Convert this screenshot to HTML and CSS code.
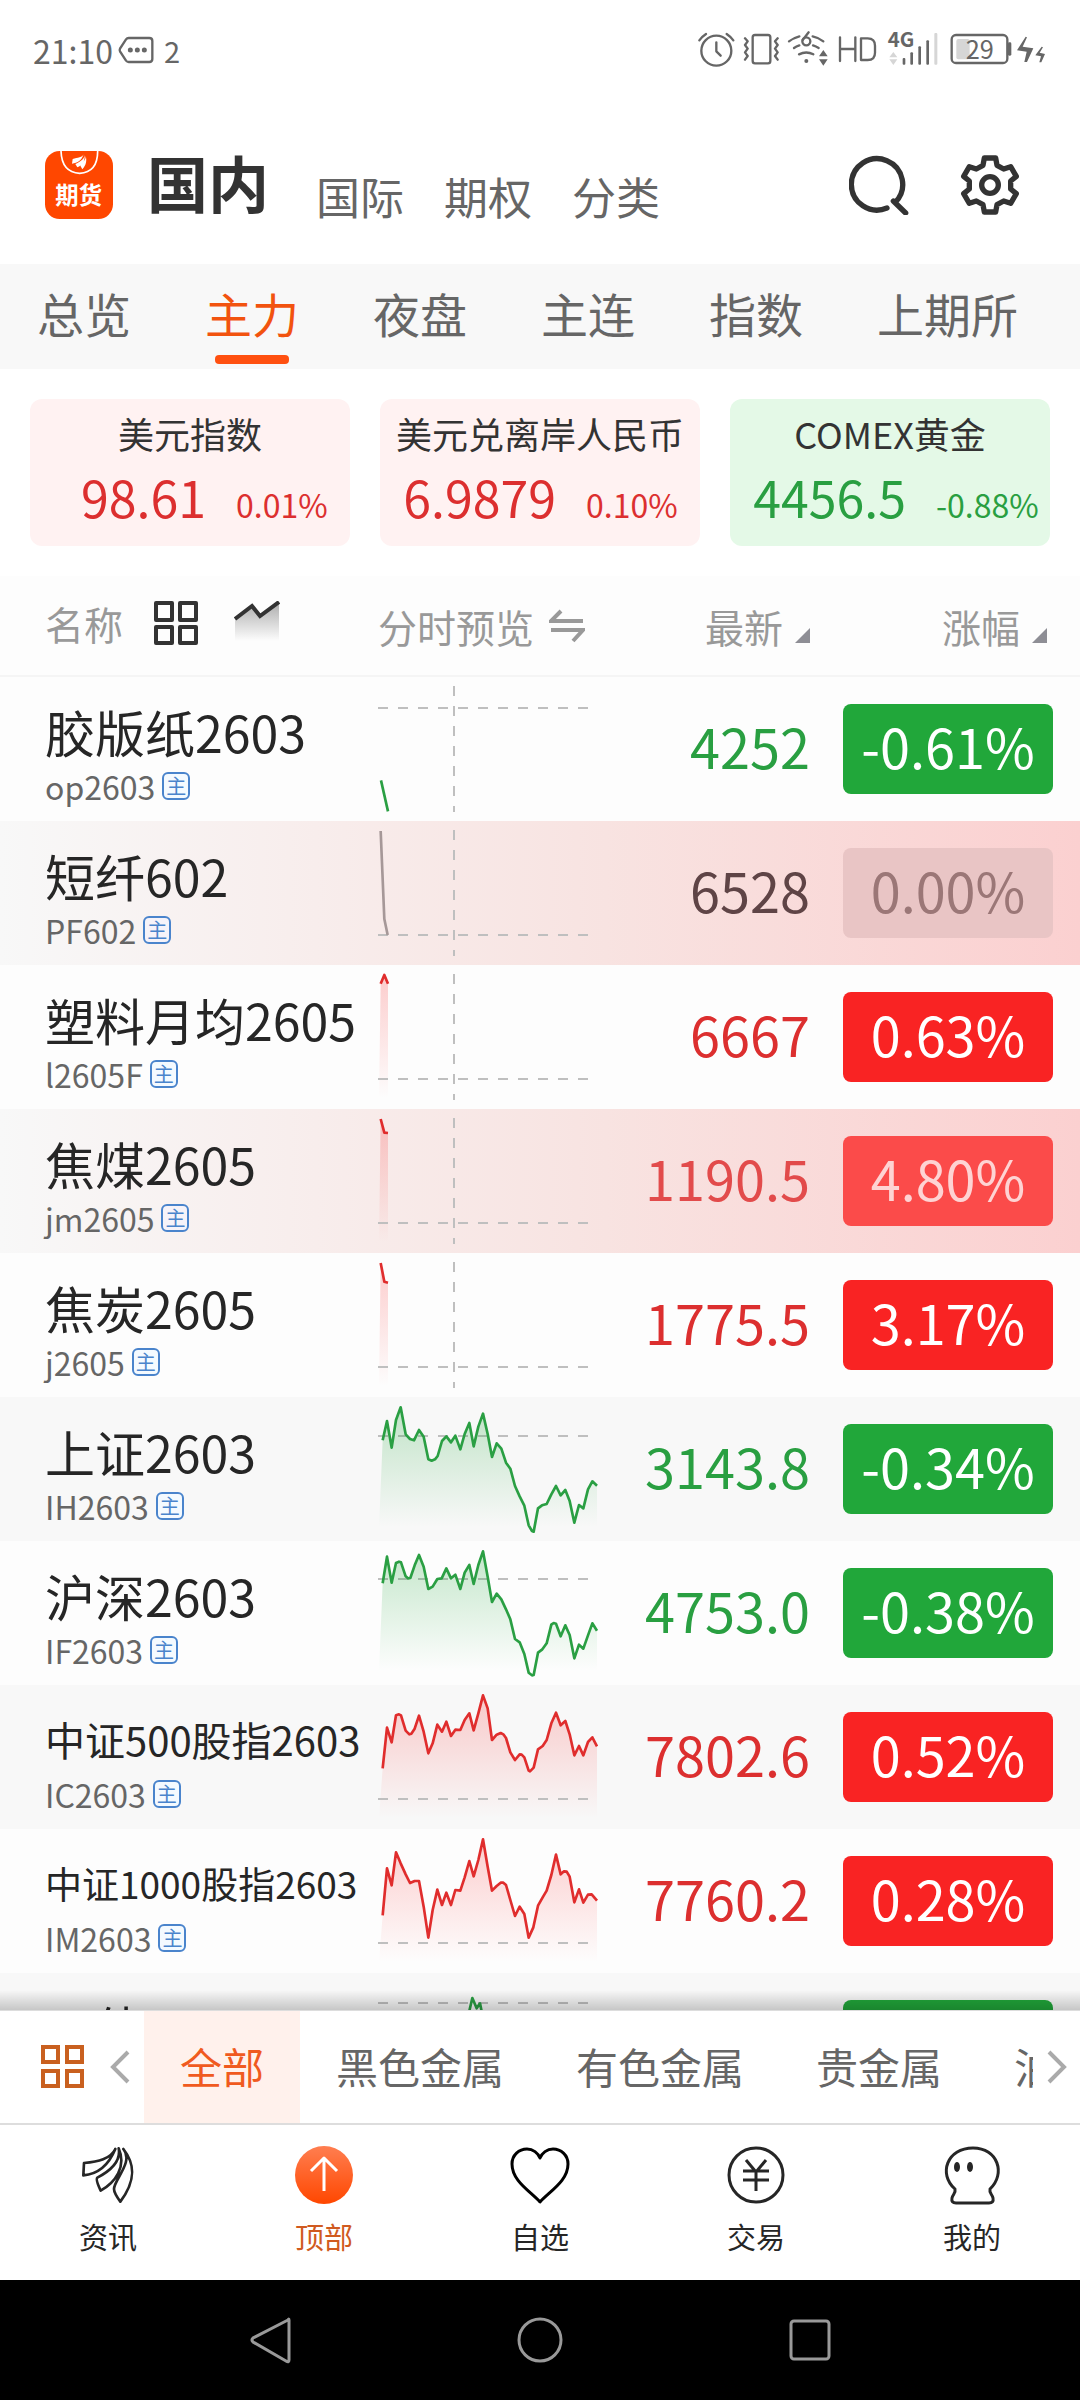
FILE: index.html
```html
<!DOCTYPE html>
<html lang="zh-CN">
<head>
<meta charset="utf-8">
<meta name="viewport" content="width=device-width">
<title>期货行情</title>
<link rel="stylesheet" href="styles.css">
</head>
<body>
<div class="app">
  <div class="status">
    <div class="status-left">
      <span class="clock">21:10</span>
      <svg class="msg" viewBox="0 0 108 84" aria-hidden="true"><path d="M32 6H94Q103 6 103 15V69Q103 78 94 78H32Q27 78 24 74L6 46Q4 42 6 38L24 10Q27 6 32 6Z"/><circle cx="37" cy="42" r="4"/><circle cx="58" cy="42" r="4"/><circle cx="79" cy="42" r="4"/></svg>
      <span class="count">2</span>
    </div>
    <svg class="status-icons" viewBox="170 60 1080 180" aria-hidden="true">
      <g class="line">
        <circle cx="231" cy="152" r="45"/><path d="M231 127V154L244 167M180 121Q188 110 200 102M262 102Q274 110 282 121"/>
        <rect x="340" y="105" width="53" height="85" rx="7"/>
        <path d="M317 115L325 124L317 135L325 146L317 157L325 168L317 179M415 115L407 124L415 135L407 146L415 157L407 168L415 179"/>
        <path d="M449 124Q462 114 480 109M520 109Q538 113 552 124M464 144Q471 139 480 136M521 136Q530 139 538 144M479 163Q501 152 522 163"/>
        <path d="M602 112V183M648 112V183M602 147H648M665 115V180H685Q707 180 707 158V137Q707 115 685 115Z"/>
        <circle cx="501" cy="124" r="12"/><path d="M490 120L508 97"/>
        <rect x="937" y="105" width="167" height="84" rx="13"/>
      </g>
      <g class="solid">
        <circle cx="501" cy="183" r="6"/><path d="M539 169L552 150L565 169ZM539 178H565L552 197Z"/>
        <rect x="790" y="174" width="8" height="20" rx="3"/><rect x="813" y="157" width="8" height="37" rx="3"/><rect x="837" y="139" width="8" height="55" rx="3"/><rect x="861" y="121" width="8" height="73" rx="3"/>
        <rect x="1106" y="127" width="10" height="40" rx="4"/>
        <path d="M1159 110L1133 151L1162 155L1155 186H1163L1182 145L1150 140L1163 112ZM1207 140L1188 166L1205 169L1200 187H1206L1217 162L1201 158L1211 142Z"/>
      </g>
      <g class="faint"><path d="M750 172L762 156L774 172ZM750 178H774L762 195Z"/><rect x="885" y="99" width="9" height="95" rx="3"/><rect x="951" y="117" width="40" height="61" rx="6"/></g>
      <text class="net" x="745" y="141">4G</text>
      <text class="charge" x="979" y="177">29</text>
    </svg>
  </div>

  <header class="top">
    <svg class="logo" viewBox="0 0 204 204" role="img" aria-label="期货">
      <rect width="204" height="204" rx="44" fill="#ff4700"/>
      <path d="M48 0Q50 64 104 67Q158 64 158 0" fill="none" stroke="#fff" stroke-width="5"/>
      <path d="M116 10C112 20 98 20 83 24L81 38C98 36 110 28 116 10ZM119 12C117 26 106 32 91 39L97 49C112 42 120 30 119 12ZM122 14C124 26 112 34 106 44L112 55C124 42 126 28 122 14Z" fill="#fff"/>
      <text x="31" y="160" class="logo-text">期货</text>
    </svg>
    <nav class="markets">
      <a href="#" class="current">国内</a><a href="#">国际</a><a href="#">期权</a><a href="#">分类</a>
    </nav>
    <button class="tool" aria-label="搜索"><svg viewBox="0 0 180 180"><path d="M114 159A77 77 0 1 1 138 143M133 138L170 174"/></svg></button>
    <button class="tool" aria-label="设置"><svg viewBox="-90 -90 180 180"><path d="M-17 -81H17L21 -59L41 -48L62 -55L79 -26L62 -12V12L79 26L62 55L41 48L21 59L17 81H-17L-21 59L-41 48L-62 55L-79 26L-62 12V-12L-79 -26L-62 -55L-41 -48L-21 -59Z"/><circle r="25"/></svg></button>
  </header>

  <nav class="tabs">
    <a href="#">总览</a><a href="#" class="current">主力</a><a href="#">夜盘</a><a href="#">主连</a><a href="#">指数</a><a href="#">上期所</a>
  </nav>

  <section class="cards">
    <article class="card up"><h2>美元指数</h2><p><b>98.61</b><span>0.01%</span></p></article>
    <article class="card up"><h2>美元兑离岸人民币</h2><p><b>6.9879</b><span>0.10%</span></p></article>
    <article class="card down"><h2>COMEX黄金</h2><p><b>4456.5</b><span>-0.88%</span></p></article>
  </section>

  <main class="list">
    <svg class="defs" aria-hidden="true">
      <defs>
        <linearGradient id="gg" x1="0" y1="0" x2="0" y2="390" gradientUnits="userSpaceOnUse"><stop offset="0" stop-color="#21a73a" stop-opacity=".28"/><stop offset="1" stop-color="#21a73a" stop-opacity="0"/></linearGradient>
        <linearGradient id="rg" x1="0" y1="0" x2="0" y2="400" gradientUnits="userSpaceOnUse"><stop offset="0" stop-color="#f92323" stop-opacity=".24"/><stop offset="1" stop-color="#f92323" stop-opacity="0"/></linearGradient>
        <linearGradient id="tg" x1="0" y1="0" x2="0" y2="1"><stop offset="0" stop-color="#333" stop-opacity=".4"/><stop offset="1" stop-color="#333" stop-opacity="0"/></linearGradient>
        <linearGradient id="og" x1="0" y1="0" x2="0" y2="1"><stop offset="0" stop-color="#ff7e50"/><stop offset="1" stop-color="#ff4700"/></linearGradient>
      </defs>
    </svg>
    <table>
      <colgroup><col class="c-name"><col class="c-chart"><col class="c-price"><col class="c-change"></colgroup>
      <thead>
        <tr>
          <th><div class="th-name">名称
            <svg class="i-grid" viewBox="0 0 44 44" aria-hidden="true"><path d="M2 2H18V19H2ZM26 2H42V19H26ZM2 26H18V42H2ZM26 26H42V42H26Z"/></svg>
            <svg class="i-trend" viewBox="0 0 46 44" aria-hidden="true"><path d="M1 18L18 5L26 15L45 1V40H1Z" fill="url(#tg)"/><path class="s" d="M1 18L18 5L26 15L45 1"/></svg></div></th>
          <th><button class="sort">分时预览 <svg class="i-swap" viewBox="0 0 36 34" aria-hidden="true"><path d="M12 2L2 12H34M2 21H34L24 32"/></svg></button></th>
          <th class="num"><button class="sort">最新 <i class="tri"></i></button></th>
          <th class="num last"><button class="sort">涨幅 <i class="tri"></i></button></th>
        </tr>
      </thead>
      <tbody>
        <tr class="down"><td><div class="name">胶版纸2603</div><div class="code">op2603<span>主</span></div></td>
          <td><svg class="chart" viewBox="0 0 666 432"><path class="dash" d="M0 93H630M228 27V405"/><path class="ln" d="M9 310L30 403"/></svg></td><td class="num">4252</td><td><span class="pill">-0.61%</span></td></tr>
        <tr class="flat flash"><td><div class="name">短纤602</div><div class="code">PF602<span>主</span></div></td>
          <td><svg class="chart" viewBox="0 0 666 432"><path class="dash" d="M0 342H630M228 27V405"/><path class="ln" d="M8 30L19 294L29 342"/></svg></td><td class="num">6528</td><td><span class="pill">0.00%</span></td></tr>
        <tr class="up"><td><div class="name">塑料月均2605</div><div class="code">l2605F<span>主</span></div></td>
          <td><svg class="chart" viewBox="0 0 666 432"><path fill="url(#rg)" d="M8 56L19 30L30 56V400H3Z"/><path class="dash" d="M0 342H630M228 27V405"/><path class="ln" d="M8 56L19 30L30 56"/></svg></td><td class="num">6667</td><td><span class="pill">0.63%</span></td></tr>
        <tr class="up flash"><td><div class="name">焦煤2605</div><div class="code">jm2605<span>主</span></div></td>
          <td><svg class="chart" viewBox="0 0 666 432"><path fill="url(#rg)" d="M8 30L19 71L30 72V400H3Z"/><path class="dash" d="M0 342H630M228 27V405"/><path class="ln" d="M8 30L19 71L30 72"/></svg></td><td class="num">1190.5</td><td><span class="pill">4.80%</span></td></tr>
        <tr class="up"><td><div class="name">焦炭2605</div><div class="code">j2605<span>主</span></div></td>
          <td><svg class="chart" viewBox="0 0 666 432"><path fill="url(#rg)" d="M8 30L19 86L30 89V400H3Z"/><path class="dash" d="M0 342H630M228 27V405"/><path class="ln" d="M8 30L19 86L30 89"/></svg></td><td class="num">1775.5</td><td><span class="pill">3.17%</span></td></tr>
        <tr class="down"><td><div class="name">上证2603</div><div class="code">IH2603<span>主</span></div></td>
          <td><svg class="chart" viewBox="0 0 666 432"><path class="dash" d="M0 117H630"/><path fill="url(#gg)" d="M3 390L14 130L27 72 41 152 54 69 68 31 83 112 96 126 108 130 123 99 137 119 151 187 161 191 171 187 179 177 192 132 205 118 219 136 232 116 247 157 260 111 274 78 287 148 301 89 315 50 329 111 342 180 356 139 370 155 384 197 397 215 411 267 425 298 439 326 452 385 467 390 480 334 492 325 506 321 520 292 534 267 548 295 562 279 575 312 589 377 603 324 616 334 630 277 643 253 657 266V390Z"/><path class="ln" d="M14 130L27 72 41 152 54 69 68 31 83 112 96 126 108 130 123 99 137 119 151 187 161 191 171 187 179 177 192 132 205 118 219 136 232 116 247 157 260 111 274 78 287 148 301 89 315 50 329 111 342 180 356 139 370 155 384 197 397 215 411 267 425 298 439 326 452 385 462 402 467 404 480 334 492 325 506 321 520 292 534 267 548 295 562 279 575 312 589 377 603 324 616 334 630 277 643 253 657 266"/></svg></td><td class="num">3143.8</td><td><span class="pill">-0.34%</span></td></tr>
        <tr class="down"><td><div class="name">沪深2603</div><div class="code">IF2603<span>主</span></div></td>
          <td><svg class="chart" viewBox="0 0 666 432"><path class="dash" d="M0 114H630"/><path fill="url(#gg)" d="M3 390L14 127L27 47 41 125 54 66 63 62 69 64 83 106 90 112 97 111 110 73 123 42 137 77 151 144 164 137 178 114 191 112 205 82 219 112 232 101 247 144 260 95 274 72 287 129 301 72 315 31 329 107 342 183 356 158 370 175 384 205 397 235 411 294 425 304 439 339 452 390 467 390 480 335 492 326 506 307 520 251 527 246 534 248 548 286 562 253 575 282 589 352 603 311 616 323 630 283 643 247 657 269V390Z"/><path class="ln" d="M14 127L27 47 41 125 54 66 63 62 69 64 83 106 90 112 97 111 110 73 123 42 137 77 151 144 164 137 178 114 191 112 205 82 219 112 232 101 247 144 260 95 274 72 287 129 301 72 315 31 329 107 342 183 356 158 370 175 384 205 397 235 411 294 425 304 439 339 452 395 462 403 467 402 480 335 492 326 506 307 520 251 527 246 534 248 548 286 562 253 575 282 589 352 603 311 616 323 630 283 643 247 657 269"/></svg></td><td class="num">4753.0</td><td><span class="pill">-0.38%</span></td></tr>
        <tr class="up"><td><div class="name long">中证500股指2603</div><div class="code">IC2603<span>主</span></div></td>
          <td><svg class="chart" viewBox="0 0 666 432"><path fill="url(#rg)" d="M3 400L14 250L27 128 41 172 54 91 63 88 69 91 83 137 94 148 100 146 110 131 123 92 137 140 151 205 164 175 178 119 192 140 205 110 219 153 232 134 247 135 260 105 274 85 287 136 301 85 315 31 329 70 342 165 356 149 368 144 376 148 384 159 397 202 411 225 425 208 431 209 439 217 452 257 456 259 467 248 480 193 494 183 506 165 520 115 534 83 548 121 562 108 575 148 589 211 603 183 616 211 630 171 643 157 657 184V400Z"/><path class="dash" d="M0 342H630"/><path class="ln" d="M14 250L27 128 41 172 54 91 63 88 69 91 83 137 94 148 100 146 110 131 123 92 137 140 151 205 164 175 178 119 192 140 205 110 219 153 232 134 247 135 260 105 274 85 287 136 301 85 315 31 329 70 342 165 356 149 368 144 376 148 384 159 397 202 411 225 425 208 431 209 439 217 452 257 456 259 467 248 480 193 494 183 506 165 520 115 534 83 548 121 562 108 575 148 589 211 603 183 616 211 630 171 643 157 657 184"/></svg></td><td class="num">7802.6</td><td><span class="pill">0.52%</span></td></tr>
        <tr class="up"><td><div class="name longer">中证1000股指2603</div><div class="code">IM2603<span>主</span></div></td>
          <td><svg class="chart" viewBox="0 0 666 432"><path fill="url(#rg)" d="M3 400L14 259L27 118 41 169 54 70 68 103 83 136 96 162 110 156 123 156 137 233 151 326 164 243 178 182 192 228 205 191 219 228 232 183 247 185 260 145 274 96 287 142 301 93 315 31 329 113 342 185 356 171 368 161 376 161 384 168 397 213 411 261 425 233 439 255 452 326 466 295 480 230 494 205 506 185 520 138 534 77 548 136 558 127 566 128 575 143 589 220 603 181 616 221 630 197 641 196 657 215V400Z"/><path class="dash" d="M0 342H630"/><path class="ln" d="M14 259L27 118 41 169 54 70 68 103 83 136 96 162 110 156 123 156 137 233 151 326 164 243 178 182 192 228 205 191 219 228 232 183 247 185 260 145 274 96 287 142 301 93 315 31 329 113 342 185 356 171 368 161 376 161 384 168 397 213 411 261 425 233 439 255 452 326 466 295 480 230 494 205 506 185 520 138 534 77 548 136 558 127 566 128 575 143 589 220 603 181 616 221 630 197 641 196 657 215"/></svg></td><td class="num">7760.2</td><td><span class="pill">0.28%</span></td></tr>
        <tr class="down"><td><div class="name">二债2603</div></td>
          <td><svg class="chart" viewBox="0 0 666 432"><path class="dash" d="M0 90H630"/><path class="ln" d="M268 140L283 75L296 106L306 91L316 140"/></svg></td><td></td><td><span class="pill"></span></td></tr>
      </tbody>
    </table>
  </main>

  <div class="cats">
    <button class="all" aria-label="全部分类"><svg viewBox="0 0 44 44"><path d="M2 2H17V17H2ZM26 2H41V17H26ZM2 26H17V41H2ZM26 26H41V41H26Z"/></svg></button>
    <button class="step" aria-label="向左"><svg viewBox="0 0 20 34"><path d="M18 2L3 17L18 32"/></svg></button>
    <nav class="cat-tabs"><a href="#" class="current">全部</a><a href="#">黑色金属</a><a href="#">有色金属</a><a href="#">贵金属</a><a href="#">油脂油料</a></nav>
    <button class="step right" aria-label="向右"><svg viewBox="0 0 20 34"><path d="M2 2L17 17L2 32"/></svg></button>
  </div>

  <nav class="bottom">
    <a href="#"><svg viewBox="0 0 180 180"><path d="M112 12C98 42 60 50 18 54L16 91C54 88 88 70 112 12ZM122 10C130 50 96 78 58 98Q52 104 68 137C112 112 146 66 122 10ZM136 12C168 50 108 104 108 132Q108 144 127 170C172 110 174 60 136 12Z"/></svg>资讯</a>
    <a href="#" class="current"><svg viewBox="0 0 60 60"><circle class="disc" cx="30" cy="30" r="29"/><path class="arrow" d="M30 46V14M17 26L30 13L43 26"/></svg>顶部</a>
    <a href="#"><svg class="heart" viewBox="0 0 60 60"><path d="M30 57C20 46 2 36 2 19C2 10 9 4 17 4C23 4 28 8 30 13C32 8 37 4 43 4C51 4 58 10 58 19C58 36 40 46 30 57Z"/></svg>自选</a>
    <a href="#"><svg viewBox="0 0 60 60"><circle cx="30" cy="30" r="27"/><path d="M20 15L30 27L40 15M30 27V46M17 26H43M17 35H43"/></svg>交易</a>
    <a href="#"><svg viewBox="0 0 60 60"><path d="M14 58Q9 58 10 53C11 49 14 48 13 44C-4 29 5 3 31 3C56 3 64 29 48 44C47 48 50 49 51 53Q52 58 47 58Z"/><ellipse class="eye" cx="15" cy="22" rx="3" ry="5"/><ellipse class="eye" cx="28" cy="22" rx="3" ry="5"/></svg>我的</a>
  </nav>

  <div class="sysnav">
    <button aria-label="返回"><svg viewBox="0 0 48 48"><path d="M42 4Q43 2 43 4V44Q43 47 40 45L7 26Q5 24 7 22Z"/></svg></button>
    <button aria-label="主页"><svg viewBox="0 0 48 48"><circle cx="24" cy="24" r="21"/></svg></button>
    <button aria-label="最近任务"><svg viewBox="0 0 48 48"><rect x="5" y="5" width="38" height="38" rx="3"/></svg></button>
  </div>
</div>
</body>
</html>
```
FILE: styles.css
```css
* { box-sizing: border-box; }
body { margin: 0; background: #fff; color: #262626; font-family: "Noto Sans CJK SC", "Noto Sans", sans-serif; }
a { color: inherit; text-decoration: none; }
button { border: 0; padding: 0; margin: 0; background: none; color: inherit; font: inherit; cursor: pointer; }
svg { display: block; fill: none; }
h2, p { margin: 0; font-weight: 400; }
.app { display: flex; flex-direction: column; height: 100vh; overflow: hidden; }

/* status bar */
.status { display: flex; justify-content: space-between; align-items: center; height: 100px; padding: 0 24px 0 33px; color: #666; }
.status-left { display: flex; align-items: center; }
.clock { font-size: 32px; line-height: 48px; }
.msg { width: 36px; height: 28px; margin: 0 10px 0 5px; stroke: #666; stroke-width: 7; }
.count { font-size: 29px; line-height: 48px; }
.status-icons { width: 360px; height: 60px; }
.status-icons .line { stroke: #666; stroke-width: 7; stroke-linecap: round; stroke-linejoin: round; }
.status-icons .solid { fill: #666; }
.status-icons .faint { fill: #d6d6d6; }
.status-icons text { fill: #666; }
.net { font-size: 61px; font-weight: 700; }
.charge { font-size: 76px; }

/* header */
.top { display: flex; align-items: center; height: 164px; padding: 6px 60px 0 45px; }
.logo { width: 68px; height: 68px; }
.logo-text { fill: #fff; font-size: 70px; font-weight: 700; }
.markets { display: flex; flex: 1; align-items: flex-end; gap: 40px; margin: 0 0 6px 34px; color: #666; font-size: 44px; line-height: 44px; }
.markets .current { margin-right: 7px; color: #333; font-size: 61px; line-height: 72px; font-weight: 700; }
.tool { margin-left: 51px; }
.tool svg { width: 60px; height: 60px; stroke: #333; stroke-width: 16; stroke-linecap: round; stroke-linejoin: round; }

.tabs { display: flex; gap: 74px; height: 105px; padding-left: 37px; background: #f8f8f8; color: #666; font-size: 47px; line-height: 98px; white-space: nowrap; }
.tabs a { position: relative; }
.tabs .current { color: #f2530f; }
.tabs .current::after { content: ""; position: absolute; left: 10px; right: 10px; bottom: 5px; height: 9px; border-radius: 4px; background: #ff5010; }

.cards { display: grid; grid-template-columns: repeat(3, 1fr); gap: 30px; padding: 30px; }
.card { height: 147px; padding-top: 8px; border-radius: 12px; white-space: nowrap; }
.card h2 { font-size: 36px; line-height: 52px; text-align: center; color: #333; }
.card p { display: flex; align-items: baseline; line-height: 74px; }
.card b { width: 55%; margin-right: 30px; text-align: right; font-size: 50px; font-weight: 400; }
.card span { font-size: 32px; }
.card.up { background: #fff2f2; color: #dc2f2f; }
.card.down { background: #e4f9e7; color: #299f41; }

/* quotes */
.list { position: relative; flex: 1; min-height: 0; overflow: hidden; background: #fdfdfd; }
.list::after { content: ""; position: absolute; left: 0; right: 0; bottom: 0; height: 20px; background: linear-gradient(#0000, #0003); }
.defs { position: absolute; width: 0; height: 0; }
table { width: 100%; border-collapse: separate; border-spacing: 0; table-layout: fixed; }
.c-name { width: 35%; } .c-chart { width: 21%; } .c-price { width: 19%; } .c-change { width: 25%; }
th { height: 101px; padding: 0; border-bottom: 2px solid #f5f5f5; color: #999; font-size: 39px; font-weight: 400; line-height: 56px; text-align: left; white-space: nowrap; }
th:first-child, td:first-child { padding-left: 45px; }
.th-name, .sort { display: flex; align-items: center; }
.num .sort { margin-left: auto; }
.th-name { padding-bottom: 6px; }
.i-grid { width: 44px; height: 44px; margin: 0 36px 0 31px; stroke: #333; stroke-width: 4; stroke-linejoin: round; }
.i-trend { width: 46px; height: 44px; }
.i-trend .s { stroke: #333; stroke-width: 4; }
.i-swap { width: 36px; height: 34px; margin-left: 15px; stroke: #999; stroke-width: 4; }
.tri { width: 15px; height: 15px; margin: 20px 0 0 12px; background: #8e8e95; clip-path: polygon(100% 0, 100% 100%, 0 100%); }
th.last { padding-right: 33px; }
td { height: 144px; padding: 0; vertical-align: top; background: none; }
tbody tr:nth-child(even) { background: #f8f8f8; }
tbody tr.flash { background: linear-gradient(90deg, #f8f8f8, #f8e3e1 56%, #fbd0d0); }
.name { padding-top: 22px; font-size: 50px; line-height: 64px; white-space: nowrap; }
.name.long { font-size: 40px; }
.name.longer { font-size: 37px; }
.code { display: flex; align-items: center; gap: 7px; margin-top: 3px; color: #666; font-size: 32px; line-height: 40px; }
.code span { width: 28px; height: 28px; border: 2px solid #4a84cc; border-radius: 6px; background: #f4faff; color: #4a84cc; font-size: 20px; line-height: 23px; text-align: center; }
.flash .code span { background: #f6f3f9; }
.chart { width: 222px; height: 144px; }
.dash { stroke: #bfbfbf; stroke-width: 6; stroke-dasharray: 30 30; }
.ln { stroke: currentColor; stroke-width: 8; stroke-linejoin: round; }
.up .ln { color: #e02d2d; } .down .ln { color: #2a9f43; } .flat .ln { color: #a69898; }
.num { text-align: right; }
td.num { font-size: 54px; line-height: 138px; }
.up .num { color: #dc2f2f; } .down .num { color: #299f41; } .flat .num { color: #5f4446; }
.flash.up .num { color: #e24b4b; }
.pill { display: block; width: 210px; height: 90px; margin: 27px 27px 0 auto; border-radius: 8px; color: #fff; font-size: 54px; line-height: 84px; text-align: center; }
.up .pill { background: #f92323; } .down .pill { background: #21a73a; }
.flat .pill { background: #e9c5c5; color: #9b7777; }
.flash.up .pill { background: #fb4b4a; color: #fed3d3; }

/* category strip */
.cats { display: flex; align-items: center; height: 113px; border-top: 1px solid #ddd; background: #fff; }
.all { margin: 0 25px 0 41px; }
.all svg { width: 44px; height: 44px; stroke: #c9601f; stroke-width: 4; }
.step svg { width: 20px; height: 34px; stroke: #aaa; stroke-width: 4; }
.cat-tabs { display: flex; flex: 1; align-self: stretch; min-width: 0; margin: 0 14px; overflow: hidden; color: #666; font-size: 42px; line-height: 110px; white-space: nowrap; }
.cat-tabs a { padding: 0 36px; }
.cat-tabs .current { background: #fff1ec; color: #f05a20; }
.step.right { margin-right: 13px; }

.bottom { display: grid; grid-template-columns: repeat(5, 1fr); height: 157px; border-top: 2px solid #ddd; background: #fff; font-size: 29px; line-height: 44px; }
.bottom a { display: flex; flex-direction: column; align-items: center; padding-top: 20px; }
.bottom svg { width: 60px; height: 60px; margin-bottom: 9px; stroke: #262626; stroke-width: 3; stroke-linejoin: round; }
.bottom a:first-child svg { stroke-width: 8; }
.bottom .current { color: #d05a20; }
.bottom .disc { fill: url(#og); stroke: none; }
.bottom .arrow { stroke: #fff; stroke-width: 3; }
.bottom .heart { stroke: #000; }
.bottom .eye { fill: #262626; stroke: none; }

.sysnav { display: grid; grid-template-columns: repeat(3, 1fr); height: 120px; padding: 0 135px; background: #000; }
.sysnav button { display: grid; place-items: center; }
.sysnav svg { width: 48px; height: 48px; stroke: #999; stroke-width: 3; }
```
